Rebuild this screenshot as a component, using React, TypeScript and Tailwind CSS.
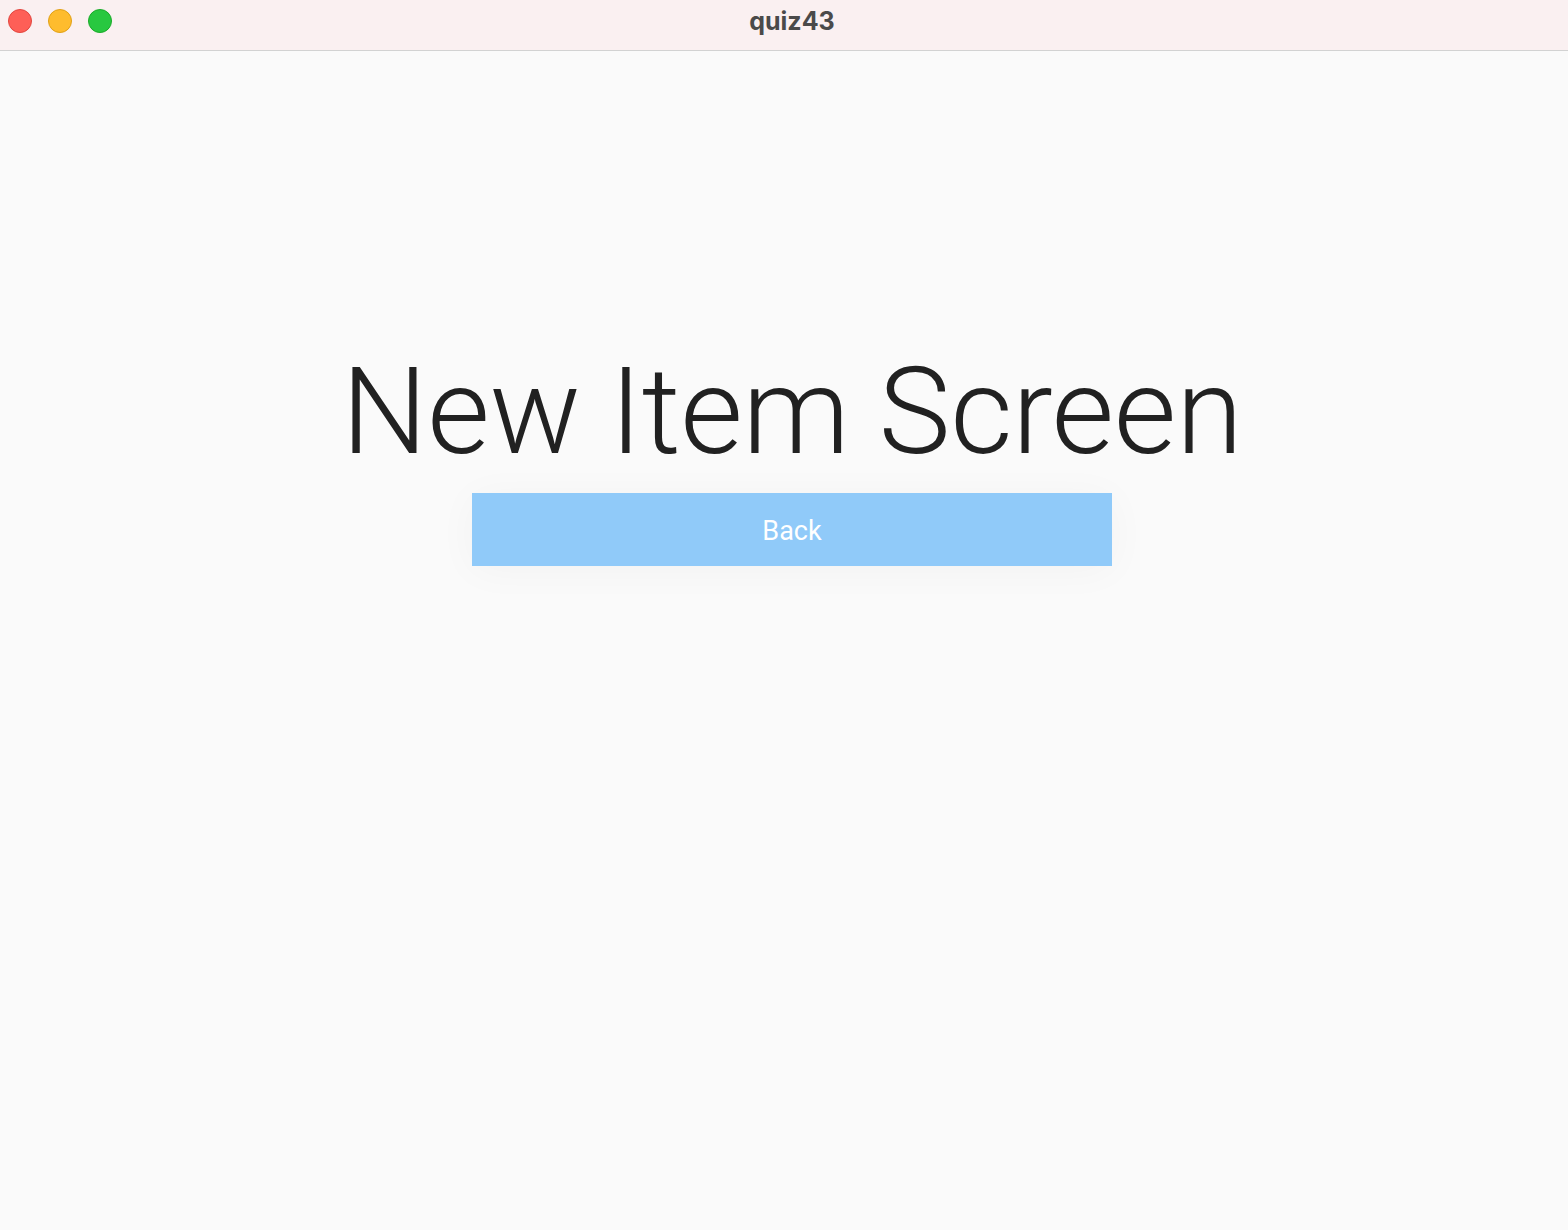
export default function App() {
  return (
    <div className="min-h-screen w-full bg-[#fafafa] flex flex-col font-['Roboto',sans-serif]">
      {/* window title bar */}
      <div className="relative h-[51px] bg-[#faf0f1] border-b border-[#d2d2d2] flex items-center justify-center pl-[16px]">
        <div className="absolute left-[8px] top-[9px] flex gap-[16px]">
          <span className="h-[24px] w-[24px] rounded-full bg-[#fe5f57] border border-[#e2463f]" />
          <span className="h-[24px] w-[24px] rounded-full bg-[#febc2e] border border-[#e1a116]" />
          <span className="h-[24px] w-[24px] rounded-full bg-[#28c840] border border-[#1aab29]" />
        </div>
        <span className="text-[25px] font-bold text-[#4a4a4a] -mt-[7px] font-['Inter',sans-serif]">quiz43</span>
      </div>

      <div className="flex flex-col items-center pt-[291px] pl-[16px]">
        <h1 className="text-[121px] leading-[1.172] font-light text-[#212121] tracking-[-0.3px]">
          New Item Screen
        </h1>
        <button className="mt-[9px] h-[73px] w-[640px] pt-[3px] bg-[#90caf9] text-white text-[27px] shadow-[0_4px_40px_rgba(0,0,0,0.035)]">
          Back
        </button>
      </div>
    </div>
  );
}
